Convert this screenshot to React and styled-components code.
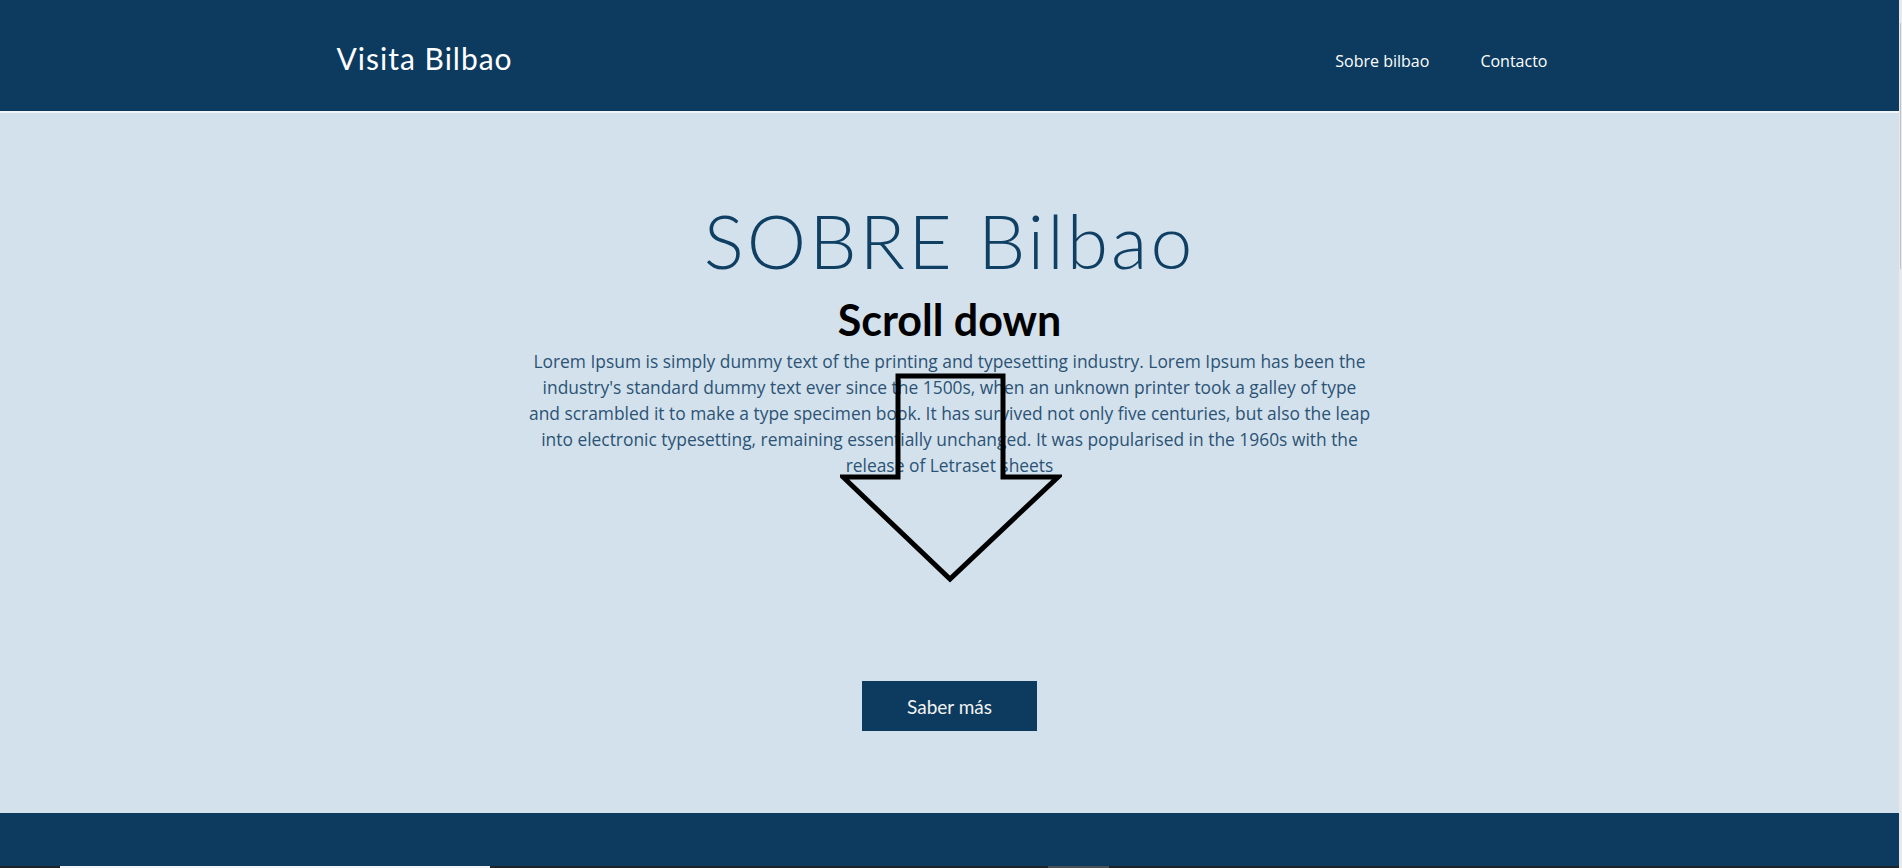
import styled, { createGlobalStyle } from "styled-components";

const GlobalStyle = createGlobalStyle`
  html, body {
    margin: 0;
    padding: 0;
    overflow: hidden;
  }
  * {
    box-sizing: border-box;
  }
`;

const Page = styled.div`
  display: flex;
  flex-flow: row nowrap;
  width: 1902px;
  height: 868px;
  overflow: hidden;
`;

const Site = styled.div`
  display: flex;
  flex-flow: column nowrap;
  flex: 1;
  min-width: 0;
`;

const Header = styled.header`
  height: 113px;
  flex-shrink: 0;
  background-color: #0c3b5f;
  border-bottom: 2px solid #f1f5f8;
`;

const HeaderInner = styled.div`
  display: flex;
  flex-flow: row nowrap;
  justify-content: space-between;
  align-items: center;
  width: 1226px;
  height: 100%;
  margin: 0 auto;
`;

const Logo = styled.div`
  margin-top: 4px;
  font-family: "Lato", "Liberation Sans", sans-serif;
  font-size: 30px;
  font-weight: 400;
  letter-spacing: 1px;
  color: #ffffff;
`;

const Nav = styled.nav`
  display: flex;
  flex-flow: row nowrap;
  gap: 51px;
  margin-top: 10px;
  padding-right: 15px;
`;

const NavLink = styled.a`
  font-family: "Open Sans", "Liberation Sans", sans-serif;
  font-size: 16px;
  color: #ffffff;
  text-decoration: none;
  cursor: pointer;
`;

const Main = styled.main`
  position: relative;
  display: flex;
  flex-flow: column nowrap;
  align-items: center;
  flex: 1;
  padding-top: 90px;
  background-color: #d3e1ec;
`;

const Title = styled.h1`
  margin: 0;
  font-family: "Lato", "Liberation Sans", sans-serif;
  font-size: 75px;
  font-weight: 300;
  line-height: 1;
  letter-spacing: 3px;
  color: #0f3f63;
`;

const ScrollDown = styled.h2`
  margin: 20px 0 0;
  font-family: "Lato", "Liberation Sans", sans-serif;
  font-size: 43px;
  font-weight: 700;
  line-height: 1;
  color: #000000;
`;

const Description = styled.p`
  max-width: 846px;
  margin: 7px 0 0;
  font-family: "Open Sans", "Liberation Sans", sans-serif;
  font-size: 17.4px;
  line-height: 26px;
  text-align: center;
  color: #2b5375;
`;

const ArrowOverlay = styled.svg`
  position: absolute;
  top: 259px;
  left: calc(50% - 110px);
  width: 222px;
  height: 212px;
  pointer-events: none;
`;

const Button = styled.button`
  width: 175px;
  height: 50px;
  margin-top: 203px;
  border: none;
  background-color: #0c3b5f;
  font-family: "Lato", "Liberation Sans", sans-serif;
  font-size: 19px;
  font-weight: 400;
  color: #f2f2f2;
  cursor: pointer;
`;

const Footer = styled.footer`
  height: 53px;
  flex-shrink: 0;
  background-color: #0c3b5f;
`;

const BottomStrip = styled.div`
  display: flex;
  flex-flow: row nowrap;
  height: 2px;
  flex-shrink: 0;
  background-color: #1f2428;
`;

const StripPart = styled.div`
  width: ${(p) => p.$width}px;
  margin-left: ${(p) => p.$offset}px;
  background-color: ${(p) => p.$color};
`;

const Gutter = styled.div`
  width: 3px;
  flex-shrink: 0;
  padding-top: 23px;
  background-color: #e9e9e9;
`;

const Thumb = styled.div`
  width: 1px;
  height: 246px;
  margin-left: 1px;
  background-color: #c2c2c2;
`;

const App = () => {
  return (
    <>
      <GlobalStyle />
      <Page>
        <Site>
          <Header>
            <HeaderInner>
              <Logo>Visita Bilbao</Logo>
              <Nav>
                <NavLink>Sobre bilbao</NavLink>
                <NavLink>Contacto</NavLink>
              </Nav>
            </HeaderInner>
          </Header>
          <Main>
            <Title>SOBRE Bilbao</Title>
            <ScrollDown>Scroll down</ScrollDown>
            <Description>
              Lorem Ipsum is simply dummy text of the printing and typesetting
              industry. Lorem Ipsum has been the industry's standard dummy text
              ever since the 1500s, when an unknown printer took a galley of
              type and scrambled it to make a type specimen book. It has
              survived not only five centuries, but also the leap into
              electronic typesetting, remaining essentially unchanged. It was
              popularised in the 1960s with the release of Letraset sheets
            </Description>
            <Button>Saber más</Button>
            <ArrowOverlay viewBox="0 0 222 212">
              <polygon
                points="58,4 163,4 163,105 218,105 110,207 3,105 58,105"
                fill="none"
                stroke="#000"
                strokeWidth="5"
                strokeLinejoin="miter"
              />
            </ArrowOverlay>
          </Main>
          <Footer />
          <BottomStrip>
            <StripPart $offset={60} $width={430} $color="#f4f4f4" />
            <StripPart $offset={558} $width={61} $color="#4a4f54" />
          </BottomStrip>
        </Site>
        <Gutter>
          <Thumb />
        </Gutter>
      </Page>
    </>
  );
};

export default App;
